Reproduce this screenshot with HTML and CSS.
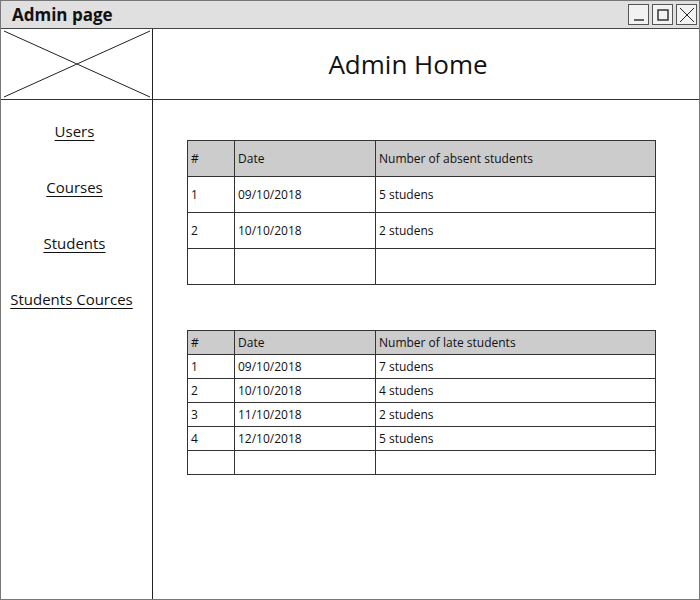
FILE: index.html
```html
<!DOCTYPE html>
<html>
<head>
<meta charset="utf-8">
<link rel="stylesheet" href="styles.css">
</head>
<body>
<div class="window">
  <div class="titlebar">
    <span class="title">Admin page</span>
    <div class="winbtns">
      <span class="wbtn"><svg width="16" height="16" viewBox="0 0 16 16"><line x1="3" y1="13" x2="13" y2="13" stroke="#333" stroke-width="1.5"/></svg></span>
      <span class="wbtn"><svg width="16" height="16" viewBox="0 0 16 16"><rect x="3" y="3" width="10" height="10" fill="none" stroke="#333" stroke-width="1.5"/></svg></span>
      <span class="wbtn"><svg width="16" height="16" viewBox="0 0 16 16"><line x1="1" y1="1" x2="15" y2="15" stroke="#222" stroke-width="1"/><line x1="15" y1="1" x2="1" y2="15" stroke="#222" stroke-width="1"/></svg></span>
    </div>
  </div>
  <div class="top">
    <div class="logo">
      <svg width="150" height="70" viewBox="0 0 150 70"><line x1="2" y1="2" x2="148" y2="68" stroke="#222" stroke-width="1"/><line x1="148" y1="2" x2="2" y2="68" stroke="#222" stroke-width="1"/></svg>
    </div>
    <div class="header"><h1>Admin Home</h1></div>
  </div>
  <div class="main">
    <nav class="sidebar">
      <a href="#">Users</a>
      <a href="#">Courses</a>
      <a href="#">Students</a>
      <a href="#" class="wide">Students Cources</a>
    </nav>
    <div class="content">
      <table class="grid tall">
        <tr class="head"><th class="c1">#</th><th class="c2">Date</th><th>Number of absent students</th></tr>
        <tr><td>1</td><td>09/10/2018</td><td>5 studens</td></tr>
        <tr><td>2</td><td>10/10/2018</td><td>2 studens</td></tr>
        <tr><td></td><td></td><td></td></tr>
      </table>
      <table class="grid short">
        <tr class="head"><th class="c1">#</th><th class="c2">Date</th><th>Number of late students</th></tr>
        <tr><td>1</td><td>09/10/2018</td><td>7 studens</td></tr>
        <tr><td>2</td><td>10/10/2018</td><td>4 studens</td></tr>
        <tr><td>3</td><td>11/10/2018</td><td>2 studens</td></tr>
        <tr><td>4</td><td>12/10/2018</td><td>5 studens</td></tr>
        <tr><td></td><td></td><td></td></tr>
      </table>
    </div>
  </div>
</div>
</body>
</html>
```
FILE: styles.css
```css
* { box-sizing: border-box; }
body {
  margin: 0;
  font-family: "Comic Sans MS", "Open Sans", "DejaVu Sans", sans-serif;
  color: #111;
  background: #fff;
}
.window {
  width: 700px;
  height: 600px;
  border: 1px solid #777;
  display: flex;
  flex-direction: column;
}
.titlebar {
  height: 28px;
  background: #e0e0e0;
  border-bottom: 1px solid #444;
  display: flex;
  align-items: center;
  justify-content: space-between;
  padding: 0 2px 0 11px;
  flex: none;
}
.title {
  font-size: 17px;
  font-weight: bold;
}
.winbtns {
  display: flex;
  gap: 3px;
}
.wbtn {
  width: 21px;
  height: 21px;
  border: 1.5px solid #555;
  background: #f2f2f2;
  display: flex;
  align-items: center;
  justify-content: center;
}
.top {
  height: 71px;
  display: flex;
  border-bottom: 1px solid #333;
  flex: none;
}
.logo {
  width: 152px;
  border-right: 1.5px solid #222;
  display: flex;
  align-items: center;
  justify-content: center;
}
.header {
  flex: 1;
  display: flex;
  align-items: center;
  justify-content: center;
  padding-right: 36px;
}
.header h1 {
  margin: 0;
  font-weight: normal;
  font-size: 26px;
}
.main {
  flex: 1;
  display: flex;
}
.sidebar {
  width: 152px;
  border-right: 1.5px solid #222;
  display: flex;
  flex-direction: column;
  align-items: center;
  padding-top: 21px;
  gap: 36px;
  padding-right: 4px;
}
.sidebar a {
  color: #111;
  font-size: 15px;
  line-height: 20px;
  text-decoration: underline;
  text-underline-offset: 3px;
}
.sidebar a.wide { margin-right: 6px; }
.content {
  flex: 1;
  padding: 40px 0 0 34px;
  display: flex;
  flex-direction: column;
  gap: 45px;
}
.grid {
  width: 469px;
  border-collapse: collapse;
  font-size: 12px;
}
.grid th, .grid td {
  border: 1px solid #333;
  text-align: left;
  font-weight: normal;
  padding: 0 0 0 3px;
  vertical-align: middle;
}
.grid .head th { background: #cccccc; }
.c1 { width: 47px; }
.c2 { width: 141px; }
.tall tr { height: 36px; }
.short tr { height: 24px; }
```
